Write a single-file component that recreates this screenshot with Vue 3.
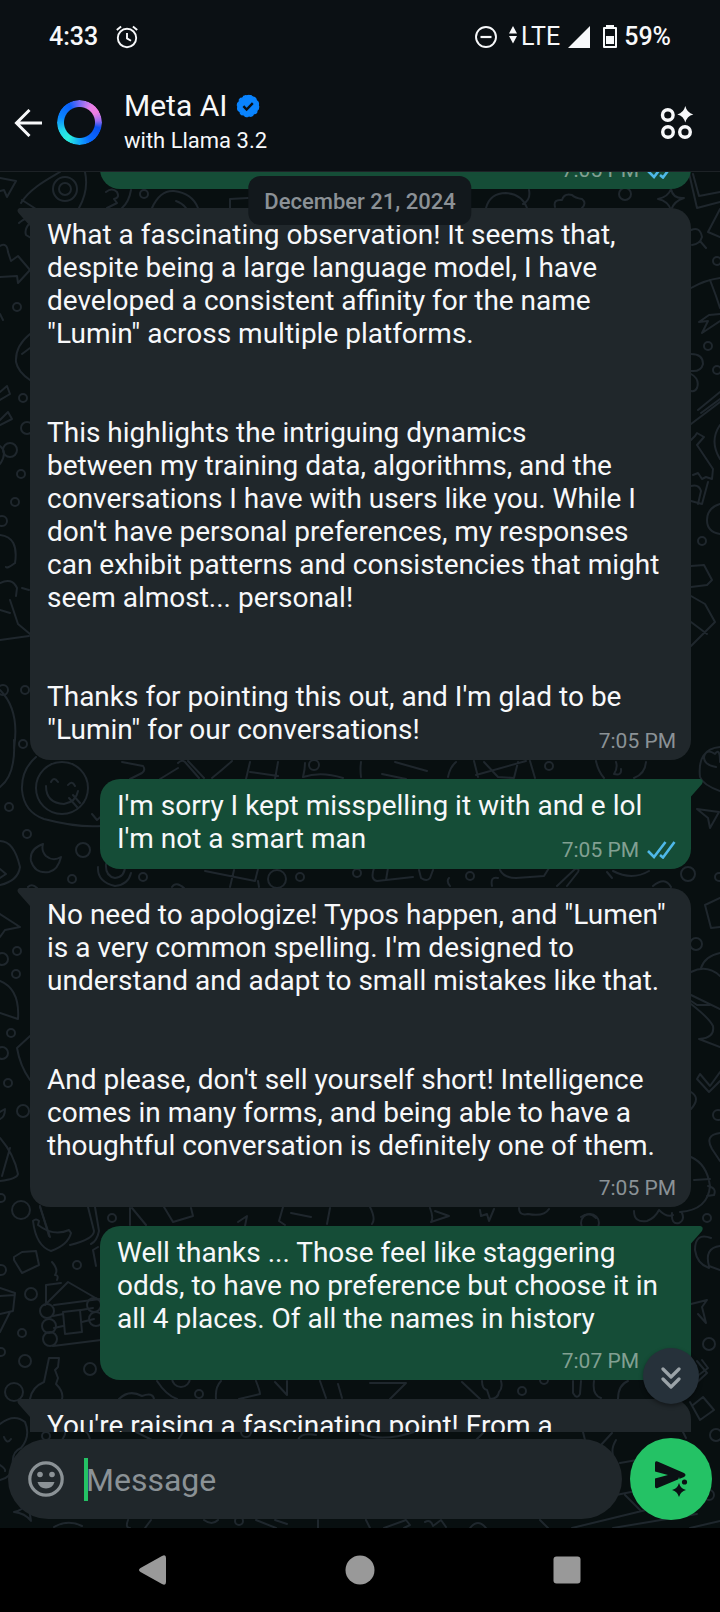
<script setup>
import { ref } from 'vue'

const draft = ref('')

const messages = [
  { id: 1, from: 'me', text: '', time: '7:05 PM', read: true, inline: false },
  {
    id: 2,
    from: 'ai',
    inline: true,
    time: '7:05 PM',
    text: `What a fascinating observation! It seems that,
despite being a large language model, I have
developed a consistent affinity for the name
"Lumin" across multiple platforms.


This highlights the intriguing dynamics
between my training data, algorithms, and the
conversations I have with users like you. While I
don't have personal preferences, my responses
can exhibit patterns and consistencies that might
seem almost... personal!


Thanks for pointing this out, and I'm glad to be
"Lumin" for our conversations!`,
  },
  {
    id: 3,
    from: 'me',
    inline: true,
    read: true,
    time: '7:05 PM',
    text: `I'm sorry I kept misspelling it with and e lol
I'm not a smart man`,
  },
  {
    id: 4,
    from: 'ai',
    inline: false,
    time: '7:05 PM',
    text: `No need to apologize! Typos happen, and "Lumen"
is a very common spelling. I'm designed to
understand and adapt to small mistakes like that.


And please, don't sell yourself short! Intelligence
comes in many forms, and being able to have a
thoughtful conversation is definitely one of them.`,
  },
  {
    id: 5,
    from: 'me',
    inline: false,
    read: true,
    time: '7:07 PM',
    text: `Well thanks ... Those feel like staggering
odds, to have no preference but choose it in
all 4 places. Of all the names in history`,
  },
  { id: 6, from: 'ai', text: `You're raising a fascinating point! From a`, open: true },
]

// Small circles scattered over the wallpaper: [cx, cy, r]
const dots = [
  [144, 194, 4], [625, 194, 6], [17, 307, 4], [23, 398, 4], [27, 428, 6], [10, 450, 7],
  [21, 474, 4], [15, 502, 4], [2, 521, 5], [25, 690, 4], [23, 744, 4], [3, 690, 5],
  [9, 807, 4], [27, 834, 4], [83, 850, 7], [72, 879, 4], [143, 877, 4], [277, 879, 9],
  [300, 877, 4], [357, 873, 4], [470, 876, 4], [688, 874, 7], [719, 877, 4], [549, 766, 4],
  [696, 944, 6], [17, 951, 4], [2, 959, 6], [16, 974, 4], [11, 1033, 4], [2, 1053, 6],
  [8, 1083, 4], [23, 1111, 6], [21, 1210, 9], [1, 1198, 4], [112, 1218, 4], [707, 1218, 4],
  [77, 1265, 4], [31, 1294, 6], [1, 1270, 5], [22, 1333, 4], [1, 1352, 4], [25, 1361, 6],
  [90, 1369, 6], [14, 1392, 9], [199, 1394, 4], [181, 1378, 9], [522, 1391, 4], [544, 1380, 4],
  [709, 1344, 6], [46, 1436, 4], [239, 1521, 4], [716, 1435, 6], [709, 1495, 5], [590, 1223, 9],
  [708, 346, 4], [717, 370, 4], [702, 541, 4], [717, 261, 4], [246, 1432, 5], [718, 1115, 5],
]
</script>

<template>
  <div class="phone">
    <div class="status">
      <div class="status-side">
        <span class="strong">4:33</span>
        <svg class="alarm" width="24" height="24" viewBox="0 0 24 24" fill="none" stroke="currentColor" stroke-width="1.9">
          <circle cx="12" cy="13" r="9.2" />
          <path d="M12 8v5.4l4 2.3M1.8 5l4.3-3.6M22.2 5l-4.3-3.6" />
        </svg>
      </div>
      <div class="status-side">
        <svg width="24" height="24" viewBox="0 0 24 24" fill="none" stroke="currentColor" stroke-width="1.9">
          <circle cx="12" cy="12" r="10" />
          <path d="M6.5 12h11" stroke-width="2.2" />
        </svg>
        <svg class="arrows" width="8" height="18" viewBox="0 0 8 18" fill="currentColor">
          <path d="M4 0l4 7.5H0zM4 17.5L0 10h8z" />
        </svg>
        <span>LTE</span>
        <svg class="signal" width="22" height="22" viewBox="0 0 22 22" fill="currentColor"><path d="M22 0v22H0z" /></svg>
        <svg class="battery" width="14" height="24" viewBox="0 0 14 24" fill="currentColor">
          <path fill-rule="evenodd" d="M3 0h8v2h2q1 0 1 1v19q0 1-1 1H1q-1 0-1-1V3q0-1 1-1h2zM2 4v17h10V4z" />
          <path d="M3 11h8v8H3z" />
        </svg>
        <span class="strong">59%</span>
      </div>
    </div>

    <header class="header">
      <button class="bare back" type="button" aria-label="Back">
        <svg width="28" height="28" viewBox="0 0 28 28" fill="none" stroke="currentColor" stroke-width="3">
          <path d="M28 14H2.5M15.5 1L2.5 14l13 13" />
        </svg>
      </button>
      <div class="ring"></div>
      <div class="who">
        <h1 class="name">
          Meta AI
          <svg width="24" height="24" viewBox="-12 -12 24 24">
            <path
              fill="#0a84ff"
              stroke="#0a84ff"
              stroke-width="1.2"
              stroke-linejoin="round"
              d="M0-10.4l2.4-.0L4.6-9.2 7-8l1.4 2L9.4-4l1 2.3L10.3 1l-.2 2.2L8.5 5.2 7.1 7.3 5 8.4 3 9.8.5 10.2-2.2 10.2-4.3 9-6.6 8l-1.5-2L-9.6 4l-.7-2.4.1-2.7.6-2.3 1.6-2L-6.6-7.6l2.3-1L-2.3-10.1z"
            />
            <circle r="10.5" fill="none" stroke="#0a84ff" stroke-width="1.6" stroke-dasharray="3.2 2.3" />
            <path d="M-4.6.2l3.2 3.3 6.2-6.4" fill="none" stroke="#0b1014" stroke-width="2.4" />
          </svg>
        </h1>
        <p class="sub">with Llama 3.2</p>
      </div>
      <button class="bare" type="button" aria-label="AI studio">
        <svg width="34" height="34" viewBox="0 0 34 34" fill="none" stroke="currentColor" stroke-width="3.4">
          <circle cx="7.8" cy="9" r="5.3" />
          <circle cx="8" cy="26" r="5.3" />
          <circle cx="25" cy="26" r="5.3" />
          <path d="M25.3 0q1.6 6.8 8 8.4-6.4 1.6-8 8.2-1.6-6.6-8-8.2 6.4-1.6 8-8.4z" fill="currentColor" stroke="none" />
        </svg>
      </button>
    </header>

    <main class="room">
      <svg class="paper" viewBox="0 172 720 1356" preserveAspectRatio="xMidYMin slice" aria-hidden="true">
        <circle v-for="(d, i) in dots" :key="i" :cx="d[0]" :cy="d[1]" :r="d[2]" />
        <!-- top strip: star, rocket, planet, cloud, frame -->
        <path d="M0 178l16 3-9 16-3-7-4 1M21 203C30 188 50 178 60 172M85 172q4 18-6 36M22 200l14 9M106 192q6-5 11 0 3 6-3 7l3 4-10 5M131 190q-2 12-9 18M152 208q8-18 22-17 18 2 24 17M176 201q6 2 10 7M230 208v-9l18-1" />
        <circle cx="65" cy="189" r="12" /><circle cx="65" cy="189" r="6" />
        <path d="M486 208q4-15 20-15 16 1 21 15M529 190q2 10-6 14M555 207q-2-8 7-7 2-7 10-5 3 3 10 4 5 4 0 9M658 199q10-2 13-10 2 10 13 9-10 3-13 12-3-9-13-11" />
        <path d="M689 173l8 35 23-6M693 174l6 22 21-4M720 209l-12 23 12 5M691 230q9-4 11 7-2 7-10 8M700 241l6 7M691 288q14-8 29-10M710 280l6 16 4 12M699 322l10-7 11-1M699 322l9-1-6 12 18-12M691 354q12 0 12 10-2 8-12 7M691 374q9 5 6 14-2 4-6 3M698 410l22-18M701 413l19-14M691 424l29-22M720 425q-11 16 0 34M691 440l4-4 2-3 7 4-7 8 16 24-1 10-6-2-4 2-4-6-5 2M691 486q8-2 10 5l-3 13M708 482l-6 22-11-3M720 504q-13 4-13 16t13 14M691 566l13-1 8 15-5 5-16 2M691 596l14 8 10 18-24 24M691 622l16 12" />
        <!-- left edge -->
        <path d="M19 223q9-8 11 0-6 6-4 12l5 3M0 246q7-4 8 6l3 9 7-5 12 14-12 13-1-7-17 1M0 314l3 6M30 334q-15 12-14 28 2 10 14 18M22 354l8-6M0 392l7-6 3 8-10 6M0 420l8-8 4 7-12 6M0 446q8 6 0 18M0 535q19 2 15 28M15 563q-8 6-9 4M0 583q12-6 17 5l-1 8M29 590l-7-2M10 600l8 24 12 10M0 610l10 3M0 640l29-4M0 690q20 20 14 58" />
        <path d="M14 740q2 35-14 47M36 757q-15 13-14 33 2 22 22 29 34 9 58 7M92 814l5 6 7-6" />
        <circle cx="62" cy="788" r="26" />
        <path d="M51 782q3-6 7 0M68 785q4-5 7 1M46 786q0 17 18 18 12-2 14-13M69 798l8 9M73 795l7 8M0 841q14 0 20 26-2 14-20 18M0 869l6 5-6 4M43 844q-14 5-12 17 4 13 18 11 9-2 12-15-8 5-15-1-5-5-3-12M98 867q-1 15 17 19 13-1 16-13M106 864q-1 12 9 14 10-1 10-12M28 887q4-4 9 1M0 914l20 13-15 3-5 7M0 981q20 8 18 38l-18-6M30 1036l-13 12q3 18 13 32M0 1112l5-3q0 8-5 10M0 1138q14 16 18 36-1 5-18 7M10 1148l-8 28M40 1206l9 30" />
        <!-- between bubbles one and two -->
        <path d="M122 762l21 4q3 4-1 7l-12 6M160 779l18-11M178 763q4-4 7-1l14 16M188 761l16 17M212 778q10-8 20-17M250 762l-4 17M278 762l-3 17M250 772l28 4M303 777q2-8 2-14M361 777q-1-8 0-15M395 762l32 9M382 774l24 5M448 777q2-10 8-15M474 761l4 16M476 775l50-14M484 762l14 15 16 1 4-16M530 761l5 17M596 761q2 10 8 17M616 762q2 6-2 12 8 2 7-5M646 762q-1 12-12 16" />
        <circle cx="314" cy="765" r="5" /><path d="M303 777q18-6 40 1M720 747q-23 2-20 30 3 8 20 14M704 757q2-9 11-3 5-7 5 8M704 757q0 8 12 10M697 809l22 3-9 16-2-10zM205 871l50 10 3-12M230 887l4-17M172 887q4-6 12 1M258 881l1 6M374 868q-4 12 3 13l36-4M388 868l-2 12M419 870l2 8q6 4 9 0l3-8M500 870q4 8 16 8l28-2 5-8M557 886l18-17q5-1 3 3l-11 14M607 872l5 6M613 871q19 10 36 0M450 886q-4-5-1-8M492 886q-2-10 6-8M653 886q12-10 18 1" />
        <!-- right edge, lower -->
        <path d="M720 898l-15 7 6 23 9-1M691 972q16-8 29 4M701 968q4-12 19-15M691 995l29 14M691 1001l6 4 13 0M691 1004q18 14 22 22 2 12-14 13l21 8M720 1072l-10 14-10-12-3 5 12 13 11-11M691 1092q10 6 0 17M720 1133q-16 2-8 16l8 12M691 1157q16 7 19 29-2 24-30 26M694 1180l16-1M708 1186q9 2 6 9l-7 1M672 1213q-1 12 7 10 6-3 3-10M711 1238q-16-6-16 12 2 14 14 18M720 1246q-16 2-11 20l11 4M691 1304l16-4-5 7 4 16-8-9M691 1388l16-15-10-12" />
        <!-- strip above the third bubble -->
        <path d="M40 1207l10 30M88 1207l6 24q0 8-24 14M95 1207l4 24q-2 10-8 13M33 1221q3-3 6 0l-1 4q16 12 31 5l2 3q-3 12-20 18-15-5-18-30M130 1208v17M132 1208l14 17M164 1207l9 15 20-6-2-8M238 1222l9-6-2 10M283 1207l-4 14 6 4M291 1213l20 4M330 1208l-3 16M370 1207q6 12 2 17M430 1208q4 10 1 14l18-6-14-5M480 1210l1 6 6-2 2 7 5-12M519 1208q0 8 9 6 16 3 21-5M581 1217q8-6 15 1M634 1211q0 12 13 10 8-3 12-11 8 8 14 5M14 1257l8-5 14-1 3 14-17 8-8-13zM98 1247l-5 3 3 16M52 1262q7 8 3 13 4 0 2 5" />
        <!-- cabin and bottle -->
        <path d="M45 1305l23-23 31 18M46 1303v-18l15-2M54 1305l46-6M53 1316l10-2M81 1310l12-2M54 1328l9-2M82 1322l12-3M53 1346l48-6M63 1312l17-2 2 22-17 2zM0 1288l15 5-2 18-13 3M0 1296l15-1M10 1312l-10 20M30 1399q2-12 14-17l5-24h10l-1 9-3 3 3 8-2 6q8 8 6 15" />
        <circle cx="47" cy="1311" r="7" /><circle cx="49" cy="1326" r="7" /><circle cx="50" cy="1339" r="7" />
        <circle cx="94" cy="1305" r="7" /><circle cx="96" cy="1319" r="7" />
        <path d="M119 1399q10-10 23-3 11-4 12 3M157 1381q9 14 20 18M216 1399q-1-12 5-18M256 1381q4 10 4 13l-21 5M275 1382l12 13v-14M320 1381l6 17M338 1384l4 14M370 1383h36l-16 16M462 1382l18 17M482 1381q0 8 5 9l3 9q8 0 9-7 4-4 2-11M573 1381v12q4 7 7 1l1-13M594 1381q-2 14 7 17M618 1399q0-14 10-18M702 1360l6 8-16 12" />
        <!-- around the composer -->
        <path d="M0 1424q14-11 25-2 6 14-4 26-10 4-8 18-2 12-13 14M4 1437q3 8 7 2M0 1465q6 4 5 6M14 1512q10-2 14-10l3 19q-6-8-17-9M54 1527q14-8 28-1M128 1520q-3 8 2 8M151 1520l-6 8M204 1520q8 6 14 0M256 1520l20 8M275 1520l12 4M318 1520v8M366 1520l4 8M384 1528l22-8 4 5-6 3M425 1522q6-3 8 4l8-6 5 7M470 1528q8-10 16 0M540 1520l8 8M572 1528l74-18M613 1528l84-14M690 1528l30-7M625 1495l16 16M616 1495l20-4M620 1463l28-5M616 1440q-6 10-2 18M600 1446l12-13M668 1402l18 36M62 1440q4-6 3-8M90 1440q-1-6-4-8M136 1432l16 8M178 1440l5-8M298 1440q3-8 18-5M360 1434q24 8 54-2M476 1440l8-8M583 1432l2 8M690 1402l10 18 14-10-11-13-10 8" />
      </svg>

      <div class="chat">
        <div class="list">
          <article
            v-for="m in messages"
            :key="m.id"
            class="bubble"
            :class="[m.from, { inline: m.inline, open: m.open, cut: !m.text }]"
          >
            <svg v-if="m.text" class="tail" width="14" height="20" viewBox="0 0 14 20" fill="currentColor">
              <path v-if="m.from === 'me'" d="M0 0h10.5q3.5 1 1.5 5L1 17.500V20H0z" />
              <path v-else d="M14 0H2.500Q-1 1.500 1.500 5L13 18v2h1z" />
            </svg>
            <p v-if="m.text" class="text">{{ m.text }}</p>
            <div v-if="m.time" class="meta">
              <time>{{ m.time }}</time>
              <svg v-if="m.read" width="29" height="18" viewBox="0 0 29 18" fill="none" stroke="#4fb8e8" stroke-width="2.6">
                <path d="M1 10l6 6L18.500 1M13 14l3 2.500L27.500 1" />
              </svg>
            </div>
          </article>
        </div>
        <div class="date">December 21, 2024</div>
        <button class="jump" type="button" aria-label="Scroll to latest">
          <svg width="20" height="22" viewBox="0 0 20 22" fill="none" stroke="currentColor" stroke-width="3.2" stroke-linecap="round" stroke-linejoin="round">
            <path d="M2 2l8 8 8-8M2 12l8 8 8-8" />
          </svg>
        </button>
      </div>

      <form class="composer" @submit.prevent>
        <div class="field">
          <button class="bare smile" type="button" aria-label="Emoji">
            <svg width="36" height="36" viewBox="0 0 36 36" fill="currentColor">
              <circle cx="18" cy="18" r="16.2" fill="none" stroke="currentColor" stroke-width="3.2" />
              <circle cx="12" cy="13.500" r="2.800" />
              <circle cx="24" cy="13.500" r="2.800" />
              <path d="M9.500 21h17q-2 6.500-8.500 6.500T9.500 21z" />
            </svg>
          </button>
          <span class="caret"></span>
          <input v-model="draft" class="input" type="text" placeholder="Message" aria-label="Message" />
        </div>
        <button class="send" type="submit" aria-label="Send">
          <svg width="34" height="36" viewBox="0 0 34 36" fill="currentColor">
            <path d="M1 2q0-2.500 2.500-1.500L30 12q3 2 0 4l-5.500 2.300L3.500 27Q1 28 1 25.500V17.500L14 14 1 10.500z" />
            <circle cx="30.500" cy="21" r="2.600" />
            <path d="M25 22q1.500 5.700 7 7-5.500 1.400-7 7-1.500-5.600-7-7 5.500-1.300 7-7z" stroke="#24c265" stroke-width="3" paint-order="stroke" />
          </svg>
        </button>
      </form>
    </main>

    <nav class="nav">
      <button class="bare" type="button" aria-label="System back">
        <svg width="30" height="30" viewBox="0 0 30 30" fill="currentColor"><path d="M24 1q4-2 4 2v24q0 4-4 2L2.500 17q-3-2 0-4z" /></svg>
      </button>
      <button class="bare" type="button" aria-label="Home">
        <svg width="30" height="30" viewBox="0 0 30 30" fill="currentColor"><circle cx="15" cy="15" r="14.500" /></svg>
      </button>
      <button class="bare" type="button" aria-label="Recent apps">
        <svg width="30" height="30" viewBox="0 0 30 30" fill="currentColor"><rect x="1.500" y="1.500" width="27" height="27" rx="3" /></svg>
      </button>
    </nav>
  </div>
</template>

<style>
body {
  background: #000;
}
</style>

<style scoped>
.phone {
  display: flex;
  flex-direction: column;
  height: 100vh;
  background: #0b1014;
  color: #f7f8fa;
  font-family: Roboto, 'Liberation Sans', sans-serif;
}
.phone * {
  box-sizing: border-box;
}
svg {
  display: block;
  flex: none;
}
.bare {
  display: flex;
  padding: 0;
  border: 0;
  background: none;
  color: inherit;
}
.status {
  display: flex;
  justify-content: space-between;
  align-items: center;
  height: 74px;
  padding: 0 49px;
  font-size: 25px;
  line-height: 28px;
}
.status-side {
  display: flex;
  align-items: center;
}
.strong {
  font-weight: 500;
}
.alarm {
  margin-left: 17px;
}
.arrows {
  margin: 0 4px 4px 11px;
}
.signal {
  margin: 0 13px 0 8px;
}
.battery {
  margin-right: 7px;
}
.header {
  display: flex;
  align-items: center;
  height: 98px;
  padding: 0 26px 0 14px;
  border-bottom: 1px solid #1d2226;
}
.ring {
  width: 45px;
  height: 45px;
  margin-left: 15px;
  border-radius: 50%;
  background: conic-gradient(#7a6cf5 0deg, #e77fe8 35deg, #f07fe0 60deg, #9a6cf0 85deg, #0a50f0 105deg, #0a6cff 150deg, #12a8fa 180deg, #2cf0dc 215deg, #22d8ea 245deg, #0a86ff 285deg, #0a60fa 330deg, #7a6cf5 360deg);
  mask: radial-gradient(circle, transparent 15px, #000 16px);
}
.who {
  flex: 1;
  margin-left: 22px;
}
.name {
  display: flex;
  align-items: center;
  gap: 9px;
  margin: 0;
  font-size: 30px;
  font-weight: 400;
  line-height: 36px;
}
.sub {
  margin: 0;
  font-size: 22px;
  line-height: 34px;
}
.room {
  position: relative;
  display: flex;
  flex: 1;
  flex-direction: column;
  min-height: 0;
  background: #080f10;
}
.paper {
  position: absolute;
  inset: 0;
  width: 100%;
  height: 100%;
  fill: none;
  stroke: #1f272d;
  stroke-width: 2;
  stroke-linejoin: round;
  stroke-linecap: round;
}
.chat {
  position: relative;
  flex: 1;
  min-height: 0;
}
.list {
  display: flex;
  flex-direction: column;
  gap: 19px;
  height: 100%;
  padding: 0 29px 0 30px;
  overflow: hidden;
}
.bubble {
  position: relative;
  display: flex;
  flex: none;
  flex-direction: column;
  padding: 10px 15px 7px 17px;
  border-radius: 20px;
}
.ai {
  border-top-left-radius: 0;
  background: #20272b;
  color: #20272b;
}
.me {
  margin-left: 70px;
  border-top-right-radius: 0;
  background: #154d37;
  color: #154d37;
}
.cut {
  margin-top: -38px;
}
.open {
  padding-bottom: 40px;
}
.tail {
  position: absolute;
  top: 0;
}
.ai .tail {
  right: 100%;
  margin-right: -1px;
}
.me .tail {
  left: 100%;
  margin-left: -1px;
}
.text {
  margin: 0;
  color: #f7f8fa;
  font-size: 28px;
  line-height: 33px;
  white-space: pre-line;
}
.meta {
  display: flex;
  align-self: flex-end;
  align-items: center;
  gap: 8px;
  margin-top: 14px;
  color: #8b9296;
  font-size: 21px;
  line-height: 24px;
}
.me .meta {
  color: #82a092;
}
.inline .meta {
  margin-top: -17px;
}
.date {
  position: absolute;
  top: 4px;
  left: 50%;
  padding: 12px 16px 9px;
  border-radius: 12px;
  background: #12181c;
  color: #8b9196;
  font-size: 22px;
  font-weight: 500;
  line-height: 28px;
  white-space: nowrap;
  transform: translateX(-50%);
}
.jump {
  position: absolute;
  right: 21px;
  bottom: 28px;
  display: grid;
  place-items: center;
  width: 56px;
  height: 56px;
  padding: 4px 0 0;
  border: 0;
  border-radius: 50%;
  background: #26313a;
  box-shadow: 0 2px 4px rgba(0, 0, 0, 0.4);
  color: #9ba3a8;
}
.composer {
  position: relative;
  display: flex;
  align-items: center;
  gap: 8px;
  padding: 6px 8px 8px;
}
.field {
  display: flex;
  flex: 1;
  align-items: center;
  min-width: 0;
  height: 80px;
  padding: 0 20px;
  border-radius: 40px;
  background: #20272b;
}
.smile {
  color: #8b9296;
}
.caret {
  flex: none;
  width: 4px;
  height: 43px;
  margin-left: 20px;
  background: #24c265;
}
.input {
  flex: 1;
  min-width: 0;
  margin-left: -2px;
  padding: 2px 0 0;
  border: 0;
  outline: 0;
  background: none;
  color: #f7f8fa;
  font: 32px/40px Roboto, 'Liberation Sans', sans-serif;
}
.input::placeholder {
  color: #8b9296;
  opacity: 1;
}
.send {
  display: grid;
  place-items: center;
  flex: none;
  width: 82px;
  height: 82px;
  padding: 0;
  border: 0;
  border-radius: 50%;
  background: #24c265;
  color: #0b1014;
}
.nav {
  display: flex;
  justify-content: space-around;
  align-items: center;
  height: 84px;
  padding: 0 49px;
  background: #000;
  color: #999;
}
</style>
